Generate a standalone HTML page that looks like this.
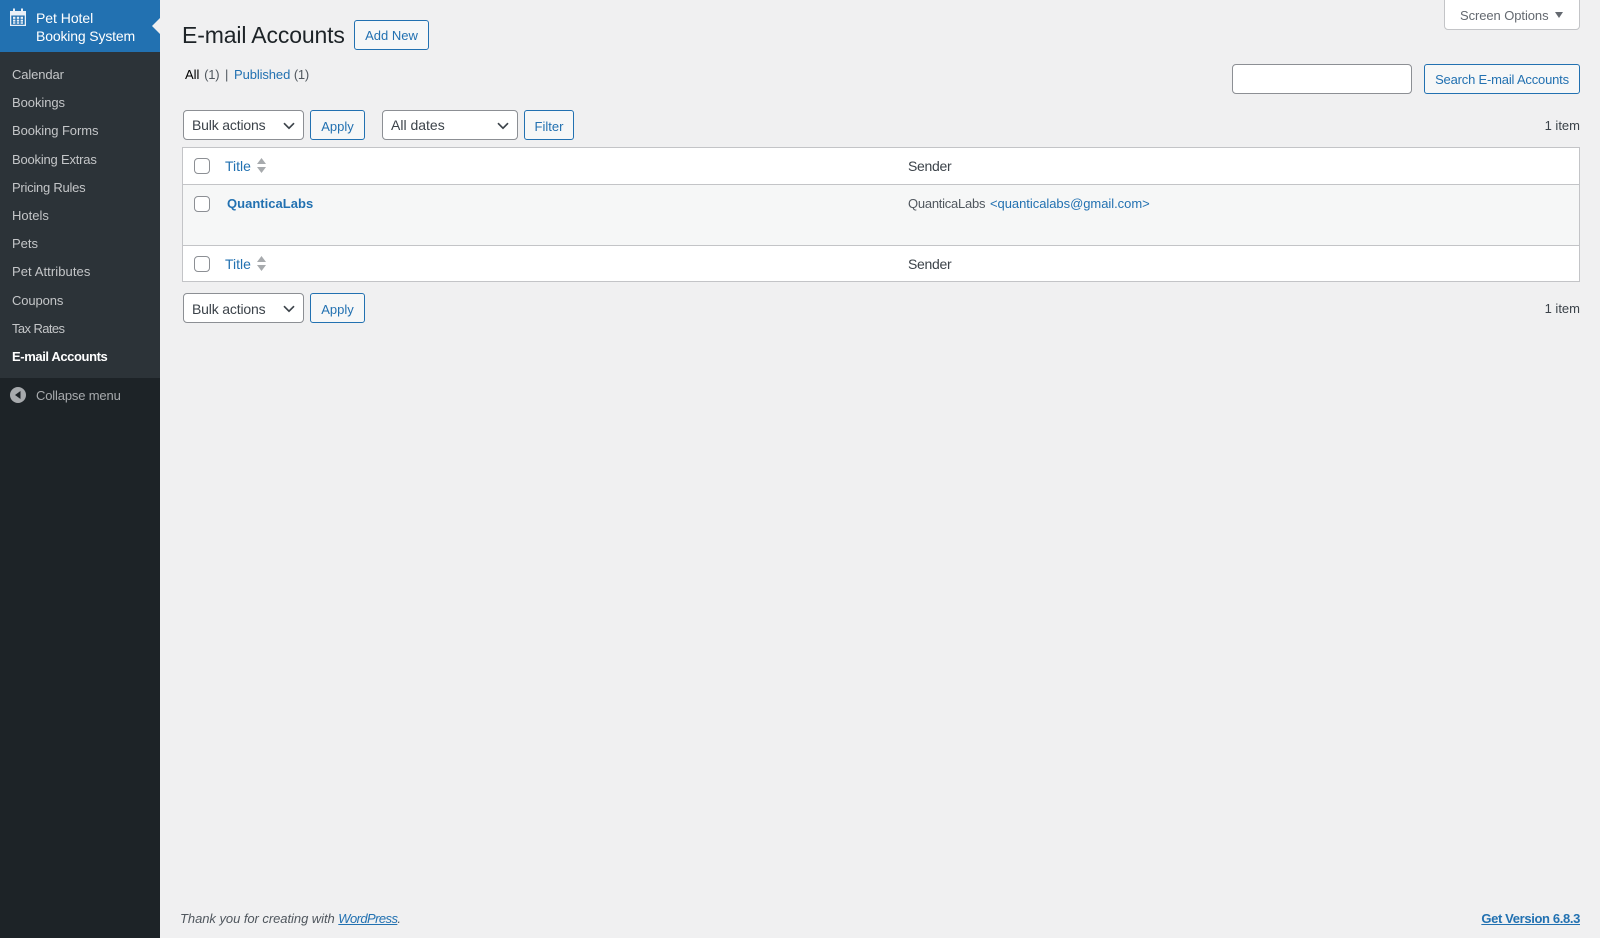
<!DOCTYPE html>
<html><head><meta charset="utf-8"><title>E-mail Accounts</title>
<style>
html,body{margin:0;padding:0;width:1600px;height:938px;overflow:hidden;background:#f0f0f1;font-family:"Liberation Sans",sans-serif;font-size:13px;color:#3c434a}
.a{position:absolute}
.t{position:absolute;white-space:nowrap;line-height:20px;height:20px}
.m{left:12px;color:#c4c6c8;font-size:13px}
.l{color:#2271b1}
.btn{position:absolute;box-sizing:border-box;height:30px;border:1px solid #2271b1;border-radius:3px;background:#f6f7f7;color:#2271b1;text-align:center;line-height:29px;white-space:nowrap}
.sel{position:absolute;box-sizing:border-box;height:30px;border:1px solid #8c8f94;border-radius:4px;background:#fff;color:#3c434a;font-size:14px;line-height:28px;padding-left:8px;white-space:nowrap}
.sel svg{position:absolute;top:11px;right:8px}
.cb{position:absolute;box-sizing:border-box;left:194px;width:16px;height:16px;border:1px solid #8c8f94;border-radius:4px;background:#fff}
</style></head><body>

<div class="a" style="left:0;top:0;width:160px;height:938px;background:#1d2327"></div>
<div class="a" style="left:0;top:52px;width:160px;height:326px;background:#2c3338"></div>
<div class="a" style="left:0;top:0;width:160px;height:52px;background:#2271b1"></div>
<svg class="a" style="left:152px;top:18px" width="8" height="16"><path d="M8 0L0 8L8 16Z" fill="#f0f0f1"/></svg>

<svg class="a" style="left:10px;top:8px" width="16" height="18" viewBox="0 0 16 18">
<path d="M0 3H3V0.5H5V3H11V0.5H13V3H16V18H0ZM1.3 7.5V16.7H14.7V7.5Z" fill="#e9f0f7" fill-rule="evenodd"/>
<path d="M3 8.8h2.4v2.1H3zM6.8 8.8h2.4v2.1H6.8zM10.6 8.8H13v2.1h-2.4zM3 11.6h2.4v2H3zM6.8 11.6h2.4v2H6.8zM10.6 11.6H13v2h-2.4zM3 14.2h2.4v1.6H3zM6.8 14.2h2.4v1.6H6.8zM10.6 14.2H13v1.6h-2.4z" fill="#e9f0f7"/>
</svg>
<div class="t" style="left:36px;top:8px;color:#fff;font-size:14px;letter-spacing:-.04px">Pet Hotel</div>
<div class="t" style="left:36px;top:26px;color:#fff;font-size:14px;letter-spacing:-.15px">Booking System</div>

<div class="t m" style="top:65px;letter-spacing:-.12px">Calendar</div>
<div class="t m" style="top:93px;letter-spacing:-.06px">Bookings</div>
<div class="t m" style="top:121px;letter-spacing:-.08px">Booking Forms</div>
<div class="t m" style="top:150px;letter-spacing:-.2px">Booking Extras</div>
<div class="t m" style="top:178px;letter-spacing:-.25px">Pricing Rules</div>
<div class="t m" style="top:206px">Hotels</div>
<div class="t m" style="top:234px">Pets</div>
<div class="t m" style="top:262px;letter-spacing:.08px">Pet Attributes</div>
<div class="t m" style="top:291px;letter-spacing:-.12px">Coupons</div>
<div class="t m" style="top:319px;letter-spacing:-.6px">Tax Rates</div>
<div class="t m" style="top:347px;color:#fff;font-weight:bold;letter-spacing:-.4px">E-mail Accounts</div>

<svg class="a" style="left:10px;top:387px" width="16" height="16"><circle cx="8" cy="8" r="8" fill="#a7aaad"/><path d="M10.5 4V12L5 8Z" fill="#1d2327"/></svg>
<div class="t" style="left:36px;top:386px;color:#a7aaad;letter-spacing:-.16px">Collapse menu</div>

<div class="a" style="left:1444px;top:-1px;box-sizing:border-box;width:136px;height:31px;background:#fff;border:1px solid #c3c4c7;border-radius:0 0 4px 4px"></div>
<div class="t" style="left:1460px;top:6px;color:#646970;letter-spacing:-.08px">Screen Options</div>
<svg class="a" style="left:1555px;top:12px" width="8" height="6"><path d="M0 0H8L4 6Z" fill="#646970"/></svg>

<div class="t" style="left:182px;top:20px;line-height:30px;height:30px;font-size:23px;color:#1d2327;letter-spacing:-.14px">E-mail Accounts</div>
<div class="btn" style="left:354px;top:20px;width:75px">Add New</div>

<div class="t" style="left:185px;top:65px;color:#000">All <span style="color:#50575e;margin-left:1px;letter-spacing:-.2px">(1)</span></div>
<div class="t" style="left:225px;top:65px;color:#50575e">|</div>
<div class="t" style="left:234px;top:65px"><span class="l" style="letter-spacing:-.1px">Published</span> <span style="color:#50575e;letter-spacing:-.25px">(1)</span></div>

<div class="a" style="left:1232px;top:64px;box-sizing:border-box;width:180px;height:30px;background:#fff;border:1px solid #8c8f94;border-radius:4px"></div>
<div class="btn" style="left:1424px;top:64px;width:156px;letter-spacing:-.19px">Search E-mail Accounts</div>

<div class="sel" style="left:183px;top:110px;width:121px;letter-spacing:-.17px">Bulk actions<svg width="12" height="8" viewBox="0 0 12 8"><path d="M1 1.2L6 6.2L11 1.2" fill="none" stroke="#3c434a" stroke-width="1.7"/></svg></div>
<div class="btn" style="left:310px;top:110px;width:55px;line-height:31px">Apply</div>
<div class="sel" style="left:382px;top:110px;width:136px">All dates<svg width="12" height="8" viewBox="0 0 12 8"><path d="M1 1.2L6 6.2L11 1.2" fill="none" stroke="#3c434a" stroke-width="1.7"/></svg></div>
<div class="btn" style="left:524px;top:110px;width:50px;line-height:31px">Filter</div>
<div class="t" style="right:20px;top:116px;color:#3c434a">1 item</div>

<div class="a" style="left:182px;top:147px;box-sizing:border-box;width:1398px;height:135px;background:#fff;border:1px solid #c3c4c7"></div>
<div class="a" style="left:183px;top:184px;width:1396px;height:62px;box-sizing:border-box;background:#f6f7f7;border-top:1px solid #c3c4c7;border-bottom:1px solid #c3c4c7"></div>

<div class="cb" style="top:158px"></div>
<div class="t l" style="left:225px;top:156px;font-size:14px">Title</div>
<svg class="a" style="left:257px;top:158px" width="9" height="15"><path d="M4.5 0L9 6H0ZM0 9H9L4.5 15Z" fill="#a7aaad"/></svg>
<div class="t" style="left:908px;top:156px;font-size:14px;letter-spacing:-.3px">Sender</div>

<div class="cb" style="top:196px"></div>
<div class="t l" style="left:227px;top:194px;font-size:13px;font-weight:bold;letter-spacing:.02px">QuanticaLabs</div>
<div class="t" style="left:908px;top:194px;font-size:13px;color:#50575e;letter-spacing:-.25px">QuanticaLabs</div>
<div class="t l" style="left:990px;top:194px;font-size:13px;letter-spacing:-.04px">&lt;quanticalabs@gmail.com&gt;</div>

<div class="cb" style="top:256px"></div>
<div class="t l" style="left:225px;top:254px;font-size:14px">Title</div>
<svg class="a" style="left:257px;top:256px" width="9" height="15"><path d="M4.5 0L9 6H0ZM0 9H9L4.5 15Z" fill="#a7aaad"/></svg>
<div class="t" style="left:908px;top:254px;font-size:14px;letter-spacing:-.3px">Sender</div>

<div class="sel" style="left:183px;top:293px;width:121px;line-height:30px;letter-spacing:-.17px">Bulk actions<svg width="12" height="8" viewBox="0 0 12 8"><path d="M1 1.2L6 6.2L11 1.2" fill="none" stroke="#3c434a" stroke-width="1.7"/></svg></div>
<div class="btn" style="left:310px;top:293px;width:55px;line-height:31px">Apply</div>
<div class="t" style="right:20px;top:299px;color:#3c434a">1 item</div>

<div class="t" style="left:180px;top:909px;font-style:italic;color:#50575e;letter-spacing:-.05px">Thank you for creating with <span class="l" style="text-decoration:underline;letter-spacing:-.58px">WordPress</span>.</div>
<div class="t l" style="right:20px;top:909px;font-weight:bold;text-decoration:underline;font-size:13px;letter-spacing:-.36px">Get Version 6.8.3</div>

</body></html>
